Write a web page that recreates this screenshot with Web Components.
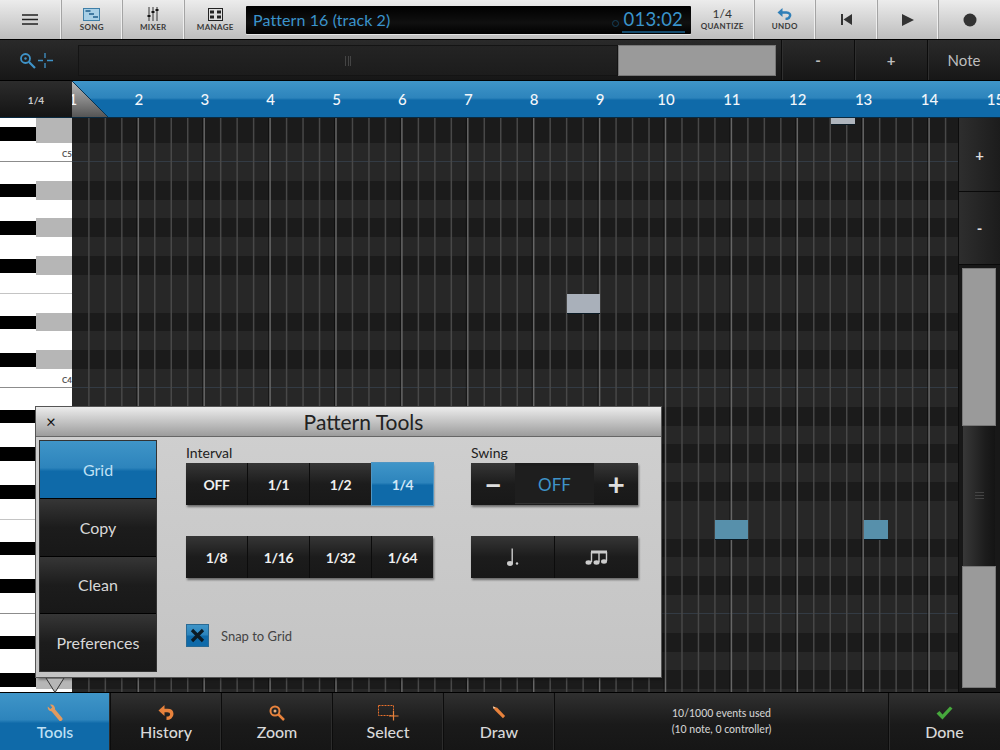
<!DOCTYPE html>
<html><head><meta charset="utf-8"><title>Pattern Tools</title>
<style>
html,body{margin:0;padding:0;width:1000px;height:750px;overflow:hidden;background:#111;font-family:Lato,"Liberation Sans",sans-serif}
svg{display:block}
</style></head><body>
<pat-app>
  <top-bar>
    <top-btn label="" w="61.5"><svg width="16" height="11" viewBox="0 0 16 11"><path d="M0 1h16M0 5.5h16M0 10h16" stroke="#222" stroke-width="1.7"/></svg></top-btn>
    <top-btn label="SONG" w="61.5"><svg width="17" height="13" viewBox="0 0 17 13"><rect x=".5" y=".5" width="16" height="12" fill="#a8cfe6" stroke="#3f7fa8"/><path d="M2.5 3h5M6 6h5M10 9h5" stroke="#1f5f8c" stroke-width="1.4"/></svg></top-btn>
    <top-btn label="MIXER" w="61.5"><svg width="12" height="14" viewBox="0 0 12 14"><path d="M2 0v14M6 0v14M10 0v14" stroke="#333" stroke-width="1"/><path d="M.5 9h3M4.500 5h3M8.500 3h3" stroke="#111" stroke-width="2"/></svg></top-btn>
    <top-btn label="MANAGE" w="61.5" nosep><svg width="15" height="13" viewBox="0 0 15 13"><rect x=".5" y=".5" width="14" height="12" fill="#ddd" stroke="#222"/><path d="M2 2.500h4v3H2zM9 2.500h4v3H9zM2 7.500h4v3H2zM9 7.500h4v3H9z" fill="#222"/></svg></top-btn>
    <lcd-display title-text="Pattern 16 (track 2)" time="013:02"></lcd-display>
    <top-btn label="QUANTIZE" w="63.5" big="1/4"></top-btn>
    <top-btn label="UNDO" w="61.5"><svg width="15" height="12" viewBox="0 0 15 12"><path d="M5 4.500H9.500C12.500 4.500 13.500 6.500 13 8C12.500 10 10.500 11 8.500 11" fill="none" stroke="#2f7fb8" stroke-width="2.4"/><path d="M0.500 4.500L5.500 0V9z" fill="#2f7fb8"/></svg></top-btn>
    <top-btn w="61.500"><svg width="13" height="13" viewBox="0 0 13 13"><path d="M1 1h2v11H1zM12 1v11L3.500 6.500z" fill="#333"/></svg></top-btn>
    <top-btn w="61.500"><svg width="14" height="14" viewBox="0 0 14 14"><path d="M1 1v12l12-6z" fill="#333"/></svg></top-btn>
    <top-btn w="61" nosep><svg width="14" height="14" viewBox="0 0 14 14"><circle cx="7" cy="7" r="6.500" fill="#333"/></svg></top-btn>
  </top-bar>
  <sub-bar>
    <dark-cell w="72"><svg width="35" height="17" viewBox="0 0 35 17"><circle cx="6.500" cy="6.500" r="4.500" fill="none" stroke="#3f93c8" stroke-width="1.800"/><circle cx="6.500" cy="6.500" r="1.200" fill="#3f93c8"/><path d="M10 10l6 6" stroke="#3f93c8" stroke-width="2.200"/><path d="M19 8.500h5M28 8.500h6M26 1v5M26 11v5" stroke="#3f93c8" stroke-width="1.300"/></svg></dark-cell>
    <zoom-track></zoom-track>
    <dark-cell w="73" sep><b>-</b></dark-cell>
    <dark-cell w="73" sep><b>+</b></dark-cell>
    <dark-cell w="73" sep>Note</dark-cell>
  </sub-bar>
  <ruler-row></ruler-row>
  <roll-area>
    <piano-keys></piano-keys>
    <note-grid></note-grid>
    <side-scroll></side-scroll>
  </roll-area>
  <bottom-bar>
    <tool-btn label="Tools" active><svg width="16" height="17" viewBox="0 0 16 17"><path d="M6 6L13.500 15" stroke="#e39a5e" stroke-width="4" stroke-linecap="round"/><path d="M.8 2.600C.2 5.500 3 8 6 7L8 5.500C8.500 2.500 6 -.2 3 .6L5.200 3.400 3.400 5z" fill="#e39a5e"/></svg></tool-btn>
    <tool-btn label="History"><svg width="16" height="15" viewBox="0 0 16 15"><path d="M5.500 5.500H9.500C12.500 5.500 13.800 7 13.800 9C13.800 11.500 11.500 13.300 8.500 13.300" fill="none" stroke="#e8823c" stroke-width="3.400"/><path d="M0.500 5.500L6.500 0V11z" fill="#e8823c"/></svg></tool-btn>
    <tool-btn label="Zoom"><svg width="16" height="16" viewBox="0 0 16 16"><circle cx="6" cy="6" r="4.500" fill="none" stroke="#e8823c" stroke-width="2"/><circle cx="6" cy="6" r="1.500" fill="#e8b080"/><path d="M9.500 9.500l5.500 5.500" stroke="#e8823c" stroke-width="2.500"/></svg></tool-btn>
    <tool-btn label="Select"><svg width="21" height="16" viewBox="0 0 21 16"><rect x=".5" y=".5" width="15" height="10" fill="none" stroke="#e8702c" stroke-dasharray="2 1"/><path d="M15.500 6v9.500M11 11h9.500" stroke="#e8823c" stroke-width="1.200"/></svg></tool-btn>
    <tool-btn label="Draw"><svg width="14" height="15" viewBox="0 0 16 16"><path d="M1 1l5 1.500L15 12l-2.500 2.500L3 5z" fill="#e8823c"/><path d="M1 1l3 .9L1.900 4z" fill="#f2d0b0"/></svg></tool-btn>
    <info-cell><span>10/1000 events used</span><span>(10 note, 0 controller)</span></info-cell>
    <tool-btn label="Done" last><svg width="17" height="14" viewBox="0 0 17 14"><path d="M0.500 7.500L3.500 5L6.500 8.500L14 .5L16.500 2.500L6.500 13.500z" fill="#46a83c"/></svg></tool-btn>
  </bottom-bar>
  <tools-modal>
    <tab-btn slot="tabs" active>Grid</tab-btn>
    <tab-btn slot="tabs">Copy</tab-btn>
    <tab-btn slot="tabs">Clean</tab-btn>
    <tab-btn slot="tabs">Preferences</tab-btn>
    <ctl-col w="247">
      <span slot="label">Interval</span>
      <seg-row><seg-btn>OFF</seg-btn><seg-btn>1/1</seg-btn><seg-btn>1/2</seg-btn><seg-btn active>1/4</seg-btn></seg-row>
      <seg-row><seg-btn>1/8</seg-btn><seg-btn>1/16</seg-btn><seg-btn>1/32</seg-btn><seg-btn>1/64</seg-btn></seg-row>
    </ctl-col>
    <ctl-col w="167">
      <span slot="label">Swing</span>
      <seg-row><seg-btn flat big>−</seg-btn><seg-btn well>OFF</seg-btn><seg-btn flat big>+</seg-btn></seg-row>
      <seg-row>
        <seg-btn><svg width="12" height="19" viewBox="0 0 12 19"><path d="M5.200 0.500V15" stroke="#ccc" stroke-width="1.400"/><ellipse cx="3" cy="15.500" rx="3" ry="2.400" fill="#ccc"/><circle cx="10" cy="15.500" r="1.200" fill="#ccc"/></svg></seg-btn>
        <seg-btn><svg width="23" height="16" viewBox="0 0 23 16"><path d="M6.500 3V13M14 3V13M21.500 3V12" stroke="#ccc" stroke-width="1.400"/><path d="M6 1.500h16V4.500H6z" fill="#ccc"/><ellipse cx="3.500" cy="13.500" rx="3" ry="2.200" fill="#ccc"/><ellipse cx="11.500" cy="13.500" rx="3" ry="2.200" fill="#ccc"/><ellipse cx="19" cy="12.500" rx="3" ry="2.200" fill="#ccc"/></svg></seg-btn>
      </seg-row>
    </ctl-col>
    <snap-check slot="foot">Snap to Grid</snap-check>
  </tools-modal>
</pat-app>
<script>
function def(name, css, html, init){
  customElements.define(name, class extends HTMLElement{
    constructor(){super();
      const r=this.attachShadow({mode:'open'});
      r.innerHTML='<style>'+css+'</style>'+html;}
    connectedCallback(){ if(init&&!this._d){this._d=1;init.call(this,this.shadowRoot);} }
  });
}
const darkGrad='linear-gradient(#363636,#1c1c1c 50%,#181818)';
const blueGrad='linear-gradient(#3f95c8,#2d84bc 47%,#0f6aa9 53%,#0f6aa9)';

def('pat-app',':host{display:flex;flex-direction:column;width:1000px;height:750px;position:relative;overflow:hidden}','<slot></slot>');
def('top-bar',':host{display:flex;height:39px;flex:none;background:linear-gradient(#ececec,#bdbdbd);box-sizing:border-box}','<slot></slot>');
def('top-btn',`:host{display:flex;flex-direction:column;align-items:center;justify-content:center;box-sizing:border-box;height:39px;flex:none;font-family:Lato,sans-serif;color:#333;gap:2px;border-right:1px solid #a4a4a4;box-shadow:inset -1px 0 0 #eee}
:host([nosep]){border-right:0;box-shadow:none}
.l{font-size:8px;font-weight:700;letter-spacing:.3px;line-height:9px;color:#3a3a3a}
.b{font-size:12px;line-height:12px;color:#333}`,
'<span class="b" id="b"></span><slot></slot><span class="l" id="l"></span>',function(r){
  this.style.width=this.getAttribute('w')+'px';
  const t=this.getAttribute('label'); if(t) r.getElementById('l').textContent=t; else r.getElementById('l').remove();
  const b=this.getAttribute('big'); if(b) r.getElementById('b').textContent=b; else r.getElementById('b').remove();
});
def('lcd-display',`:host{display:flex;align-items:center;justify-content:space-between;flex:none;box-sizing:border-box;width:445px;height:28px;margin-top:6px;padding:0 6px 0 7px;background:linear-gradient(#000,#101010 60%,#000);border-radius:1px;color:#3a94cc;font-family:Lato,sans-serif;box-shadow:0 1px 0 #fff8}
.t{font-size:16px;letter-spacing:.1px;margin-top:-2px}
.r{display:flex;align-items:center;gap:3px;height:25px}
.c{width:5px;height:5px;border:1px solid #14405c;border-radius:50%;margin-top:6px}
.n{font-size:18.500px;line-height:23px;letter-spacing:.2px;border-bottom:2px solid #134a6c;padding:0 2px}`,
'<span class="t" id="t"></span><span class="r"><span class="c"></span><span class="n" id="n"></span></span>',function(r){
  r.getElementById('t').textContent=this.getAttribute('title-text');
  r.getElementById('n').textContent=this.getAttribute('time');
});
def('sub-bar',':host{display:flex;height:42px;flex:none;background:linear-gradient(#2a2a2a,#171717);border-bottom:1px solid #000;box-sizing:border-box;border-top:1px solid #000}','<slot></slot>');
def('dark-cell',`:host{display:flex;align-items:center;justify-content:center;flex:none;box-sizing:border-box;font-size:15px;color:#bdbdbd;font-family:Lato,sans-serif}
:host([sep]){border-left:1px solid #0c0c0c;box-shadow:inset 1px 0 0 #2f2f2f}`,'<slot></slot>',function(){this.style.width=this.getAttribute('w')+'px';});
def('zoom-track',`:host{display:flex;flex:1;box-sizing:border-box;padding:5px 5px 4px 6px}
.l{flex:1;background:linear-gradient(#242424,#1c1c1c);display:flex;align-items:center;justify-content:center;box-shadow:inset 0 0 0 1px #141414}
.h{width:7px;height:10px;background:repeating-linear-gradient(90deg,#444 0 1px,transparent 1px 2.500px)}
.th{width:158px;background:#9a9a9a;box-shadow:inset 0 0 0 1px #777}`,'<div class="l"><div class="h"></div></div><div class="th"></div>');
def('ruler-row',`:host{display:flex;height:37px;flex:none;box-sizing:border-box;border-bottom:1px solid #0a2a40}
.q{width:72px;flex:none;display:flex;align-items:center;justify-content:center;background:linear-gradient(#2c2c2c,#141414);color:#ccc;font:700 10px Lato,sans-serif;padding-top:1px;box-sizing:border-box}
.s{flex:1;position:relative;overflow:hidden;background:${blueGrad}}
.n{display:flex;transform:translateX(-32px);height:100%;position:relative}
.n span{flex:none;width:65.900px;text-align:center;color:#f2f6fa;font:500 15px/36px Lato,sans-serif}
.tri{position:absolute;left:0;top:0}`,
`<div class="q">1/4</div><div class="s"><svg class="tri" width="37" height="36" viewBox="0 0 37 36"><defs><linearGradient id="tg" x1="0" y1="0" x2="0" y2="1"><stop offset="0" stop-color="#bcbcbc"/><stop offset="1" stop-color="#555"/></linearGradient></defs><path d="M0 0L36 36H0z" fill="url(#tg)"/><path d="M0 0L36 36" stroke="#0a3350" stroke-width="1"/></svg><div class="n" id="n"></div></div>`,function(r){
  const n=r.getElementById('n');
  for(let i=1;i<=15;i++){const s=document.createElement('span');s.textContent=i;n.appendChild(s);}
});
def('roll-area',':host{display:flex;height:574px;flex:none;background:#1a1a1a}','<slot></slot>');

/* rows, top-down from a partial D5: b black, c = C (line beneath), f = F (line beneath), w white */
const H=18.830;
const OCT=['b','w','b','w','b','f','w','b','w','b','c','w'];
const PAT=['d','b','c','w'].concat(OCT,OCT,['b','w','b','w']);
def('piano-keys',`:host{display:block;width:72px;flex:none;overflow:hidden;background:#fff;position:relative}
.k{box-sizing:border-box;position:relative;background:#fff}
.b{background:linear-gradient(90deg,#fff 50%,#b6b6b6 50%)}
.b i{position:absolute;left:0;top:3px;width:36px;height:13.500px;background:#000}
.d{background:linear-gradient(90deg,#fff 50%,#b6b6b6 50%)}
.c{border-bottom:1.500px solid #8c8c8c}
.f{border-bottom:1.500px solid #c4c4c4}
.c span{position:absolute;right:0;bottom:2px;font:700 8px/9px Lato,sans-serif;color:#555}`,'<div id="h"></div>',function(r){
  const h=r.getElementById('h');let oct=5;
  PAT.forEach((p,i)=>{const d=document.createElement('div');d.className='k '+p;
    d.style.height=(i==0?6.330:H)+'px';
    if(p=='b')d.appendChild(document.createElement('i'));
    if(p=='c'){const s=document.createElement('span');s.textContent='C'+oct;oct--;d.appendChild(s);}
    h.appendChild(d);});
});
def('note-grid',`:host{display:block;width:886px;flex:none;position:relative;overflow:hidden;background:#1b1b1b}
.row{box-sizing:border-box;background:#272727}
.row.b{background:#1b1b1b}
.row.d{background:#1b1b1b}
.row.c{border-bottom:1px solid #333b44}
svg{position:absolute;left:0;top:0}
.note{position:absolute;box-shadow:0 1px 0 #0a1a24}`,'<div id="h"></div>',function(r){
  const h=r.getElementById('h');
  PAT.forEach((p,i)=>{const d=document.createElement('div');d.className='row '+p;
    d.style.height=(i==0?6.330:H)+'px';h.appendChild(d);});
  let s='';
  for(let i=1;i<=54;i++){const x=(i*16.475+0.4).toFixed(2);const beat=i%4==0;
    if(beat)s+=`<line x1="${x-1.5}" x2="${x-1.5}" y1="0" y2="574" stroke="#000" stroke-opacity=".45"/>`;
    s+=`<line x1="${x}" x2="${x}" y1="0" y2="574" stroke="${beat?'#666':'#484848'}" stroke-width="1.500"/>`;}
  const w=document.createElement('div');w.innerHTML=`<svg width="886" height="574">${s}</svg>`;r.appendChild(w);
  [[759,0,24,6,'#aeb4bc'],[495,176,33,19,'#a9b0ba'],[643,402,33,19,'#5790ab'],[792,402,24,19,'#5790ab']].forEach(n=>{
    const d=document.createElement('div');d.className='note';
    d.style.cssText=`left:${n[0]}px;top:${n[1]}px;width:${n[2]}px;height:${n[3]}px;background:${n[4]}`;r.appendChild(d);});
});
def('side-scroll',`:host{display:flex;flex-direction:column;flex:1;background:#141414;border-left:1px solid #0c0c0c;box-sizing:border-box}
.btn{height:73px;flex:none;display:flex;align-items:center;justify-content:center;color:#ddd;font:700 15px Lato,sans-serif;background:linear-gradient(90deg,#2e2e2e,#1c1c1c);border-bottom:1px solid #0a0a0a;box-sizing:border-box}
.tr{flex:1;display:flex;flex-direction:column;padding:4px 5px 5px 4px;gap:1px;background:#181818}
.g{background:#9a9a9a;box-shadow:0 0 0 1px #ccc8;flex:none}
.m{flex:1;background:linear-gradient(90deg,#383838,#1c1c1c 70%,#141414);display:flex;align-items:center;justify-content:center}
.m i{width:9px;height:8px;background:repeating-linear-gradient(#444 0 1px,transparent 1px 3px)}`,
'<div class="btn" style="height:74px">+</div><div class="btn">-</div><div class="tr"><div class="g" style="height:156px"></div><div class="m"><i></i></div><div class="g" style="height:120px"></div></div>');
def('bottom-bar',':host{display:flex;height:58px;flex:none;background:linear-gradient(#303030,#1a1a1a 55%,#161616);border-top:1px solid #000;box-sizing:border-box}','<slot></slot>');
def('tool-btn',`:host{display:flex;flex-direction:column;align-items:center;justify-content:flex-start;width:111px;flex:none;box-sizing:border-box;padding-top:10px;color:#d8d8d8;font-family:Lato,sans-serif;border-right:1px solid #0c0c0c;box-shadow:inset -1px 0 0 #2c2c2c}
:host([active]){background:${blueGrad};color:#bfe0f4}
:host([last]){width:112px;border-right:0;border-left:1px solid #0c0c0c;box-shadow:inset 1px 0 0 #2c2c2c}
.i{height:19px;display:flex;align-items:center}
.t{font-size:16px;line-height:20px;font-weight:500}`,'<div class="i"><slot></slot></div><div class="t" id="t"></div>',function(r){r.getElementById('t').textContent=this.getAttribute('label');});
def('info-cell',`:host{display:flex;flex-direction:column;align-items:center;justify-content:center;flex:none;width:333px;font:500 10.500px/16px Lato,sans-serif;color:#cfcfcf;padding-bottom:2px;box-sizing:border-box}
::slotted(span){display:block}`,'<slot></slot>');
def('tools-modal',`:host{position:absolute;left:36px;top:407px;width:625px;height:270px;display:flex;flex-direction:column;background:linear-gradient(#d0d0d0,#c4c4c4);box-shadow:0 0 0 1px #555,2px 2px 3px #0008;font-family:Lato,sans-serif;color:#222;box-sizing:border-box}
.tb{height:30px;flex:none;display:flex;align-items:center;background:linear-gradient(#ececec,#9c9c9c);border-bottom:1px solid #666;box-sizing:border-box}
.x{width:30px;text-align:center;font-size:17px;line-height:30px;color:#111;flex:none}
.ti{flex:1;text-align:center;font-size:21px;line-height:30px;color:#222}
.body{flex:1;display:flex;min-height:0;padding:4px 0 6px 4px}
.tabs{width:116px;flex:none;display:flex;flex-direction:column;box-shadow:0 0 0 1px #333}
.c{flex:1;padding:4px 0 0 30px;display:flex;flex-direction:column}
.top{display:flex;gap:38px}
.foot{margin-top:46px}
.ptr2{position:absolute;left:7px;top:270px;width:24px;height:15px}`,
`<div class="tb"><span class="x">×</span><span class="ti">Pattern Tools</span></div>
<div class="body"><div class="tabs"><slot name="tabs"></slot></div>
<div class="c"><div class="top"><slot></slot></div><div class="foot"><slot name="foot"></slot></div></div></div>
<div class="ptr2"><svg width="24" height="15" viewBox="0 0 24 15"><path d="M3 0L12 14.500L21 0z" fill="#b6b6b6" stroke="#333" stroke-width="1"/></svg></div>`);
def('tab-btn',`:host{display:flex;align-items:center;justify-content:center;flex:1;background:${darkGrad};color:#d8d8d8;font-size:16px;border-top:1px solid #000;box-sizing:border-box}
:host([active]){background:${blueGrad};color:#bfe0f4;border-top:0}`,'<slot></slot>');
def('ctl-col',`:host{display:flex;flex-direction:column;flex:none;gap:31px}
.l{font-size:14px;line-height:16px;color:#222;margin-bottom:-29px}`,'<div class="l"><slot name="label"></slot></div><slot></slot>',function(){this.style.width=this.getAttribute('w')+'px';});
def('seg-row',':host{display:flex;height:42px;background:#1c1c1c;box-shadow:1px 2px 2px #0007}','<slot></slot>');
def('seg-btn',`:host{flex:1;display:flex;align-items:center;justify-content:center;box-sizing:border-box;background:${darkGrad};color:#f0f0f0;font:700 14px Lato,sans-serif;letter-spacing:-.4px;border-right:1px solid #0c0c0c}
:host(:last-child){border-right:0}
:host([active]){background:${blueGrad};color:#cfe6f6;box-shadow:0 0 0 1px #4f96c4}
:host([flat]){flex:none;width:44px;border-right:0;background:${darkGrad};color:#ddd}
:host([big]){font-size:30px;font-weight:700}
:host([well]){flex:1;background:#1e1e1e;color:#3f93c8;font-size:17px;font-weight:400;letter-spacing:0;border:0;margin:3px 0 2px;box-shadow:0 1px 0 #333}`,'<slot></slot>');
def('snap-check',`:host{display:flex;align-items:center;gap:12px;font-size:13px;color:#444;font-family:Lato,sans-serif}
.b{width:23px;height:23px;box-sizing:border-box;background:${blueGrad};border:1px solid #2a6a94;display:flex;align-items:center;justify-content:center}`,
'<span class="b"><svg width="15" height="15" viewBox="0 0 15 15"><path d="M2 2l11 11M13 2L2 13" stroke="#0c1a24" stroke-width="3.200"/></svg></span><slot></slot>');
</script>
</body></html>
